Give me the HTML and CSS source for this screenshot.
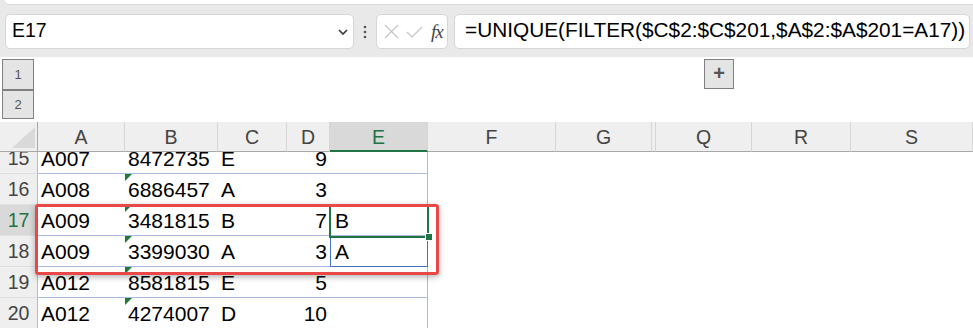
FILE: index.html
```html
<!DOCTYPE html>
<html lang="en">
<head>
    <meta charset="UTF-8">
    <title>Book1 - Excel</title>
    <link rel="stylesheet" href="styles.css">
</head>
<body>
    <div class="topbar">
        <div class="ribbon-edge"></div>
        <div class="formula-row">
            <div class="namebox">
                <span>E17</span>
                <svg class="chevron" width="10" height="6" viewBox="0 0 10 6"><path d="M1 1 L5 5 L9 1" fill="none" stroke="#333" stroke-width="1.6"/></svg>
            </div>
            <div class="grip">
                <svg width="4" height="14" viewBox="0 0 4 14"><circle cx="2" cy="2" r="1.3" fill="#555"/><circle cx="2" cy="7" r="1.3" fill="#555"/><circle cx="2" cy="12" r="1.3" fill="#555"/></svg>
            </div>
            <div class="fxbox">
                <svg width="15" height="15" viewBox="0 0 15 15"><path d="M1 1 L14 14 M14 1 L1 14" stroke="#c4c4c4" stroke-width="1.2"/></svg>
                <svg width="17" height="12" viewBox="0 0 17 12"><path d="M1 6 L6 11 L16 1" fill="none" stroke="#c4c4c4" stroke-width="1.2"/></svg>
                <span class="fx">fx</span>
            </div>
            <div class="formula">=UNIQUE(FILTER($C$2:$C$201,$A$2:$A$201=A17))</div>
        </div>
    </div>

    <div class="outline">
        <div class="levels">
            <div class="level">1</div>
            <div class="level">2</div>
        </div>
        <div class="expand">+</div>
    </div>

    <div class="sheet">
        <div class="colhead corner"></div>
        <div class="colhead">A</div>
        <div class="colhead">B</div>
        <div class="colhead">C</div>
        <div class="colhead">D</div>
        <div class="colhead active">E</div>
        <div class="colhead">F</div>
        <div class="colhead">G</div>
        <div class="colhead hidden"></div>
        <div class="colhead">Q</div>
        <div class="colhead">R</div>
        <div class="colhead">S</div>

        <div class="rowhead">15</div>
        <div class="c">A007</div>
        <div class="c">8472735</div>
        <div class="c">E</div>
        <div class="c num">9</div>
        <div class="c last"></div>
        <div class="rest"></div>

        <div class="rowhead">16</div>
        <div class="c">A008</div>
        <div class="c warn">6886457</div>
        <div class="c">A</div>
        <div class="c num">3</div>
        <div class="c last"></div>
        <div class="rest"></div>

        <div class="rowhead active">17</div>
        <div class="c">A009</div>
        <div class="c warn">3481815</div>
        <div class="c">B</div>
        <div class="c num">7</div>
        <div class="c last">B</div>
        <div class="rest"></div>

        <div class="rowhead">18</div>
        <div class="c">A009</div>
        <div class="c warn">3399030</div>
        <div class="c">A</div>
        <div class="c num">3</div>
        <div class="c last spill">A</div>
        <div class="rest"></div>

        <div class="rowhead">19</div>
        <div class="c">A012</div>
        <div class="c warn">8581815</div>
        <div class="c">E</div>
        <div class="c num">5</div>
        <div class="c last"></div>
        <div class="rest"></div>

        <div class="rowhead">20</div>
        <div class="c">A012</div>
        <div class="c warn">4274007</div>
        <div class="c">D</div>
        <div class="c num">10</div>
        <div class="c last"></div>
        <div class="rest"></div>

        <div class="selection"></div>
        <div class="callout"></div>
    </div>
</body>
</html>
```

FILE: styles.css
```css
:root {
    --chrome-bg: #e9e9e9;
    --box-border: #d6d6d6;
    --head-bg: #efefef;
    --head-sel: #d9d9d9;
    --head-text: #444;
    --excel-green: #217346;
    --grid-blue: #a8bbe0;
    --spill-blue: #4472c4;
    --callout-red: #e94848;
}
body {
    margin: 0;
    width: 973px;
    height: 328px;
    overflow: hidden;
    font-family: "Liberation Sans", Arial, sans-serif;
    background: #fff;
    color: #000;
}

/* formula bar */
.topbar {
    height: 57px;
    background: var(--chrome-bg);
}
.ribbon-edge {
    height: 4px;
    margin-left: 5px;
    background: #fff;
    border-radius: 0 0 0 6px;
    box-shadow: 0 1px 1px rgba(0, 0, 0, 0.08);
}
.formula-row {
    display: flex;
    height: 35px;
    margin-top: 10px;
    padding: 0 3px 0 5px;
}
.namebox,
.fxbox,
.formula {
    box-sizing: border-box;
    height: 35px;
    background: #fff;
    border: 1px solid var(--box-border);
    border-radius: 5px;
    display: flex;
    align-items: center;
}
.namebox {
    width: 349px;
    padding: 0 5px 2px 6px;
    font-size: 19.5px;
}
.chevron {
    margin-left: auto;
    margin-top: 3px;
}
.grip {
    width: 22px;
    display: flex;
    align-items: center;
    justify-content: center;
}
.fxbox {
    width: 72px;
    padding: 0 4px 0 7px;
    gap: 7px;
}
.fx {
    font-family: "Liberation Serif", serif;
    font-style: italic;
    font-size: 19px;
    color: #444;
    margin-left: 1px;
    letter-spacing: -1px;
}
.formula {
    flex: 1;
    margin-left: 6px;
    padding: 0 0 3px 10px;
    font-size: 20.8px;
    white-space: nowrap;
}

/* outline */
.outline {
    height: 65px;
    display: flex;
    align-items: flex-start;
}
.levels {
    margin: 2px 0 0 2px;
    border: 1px solid #808080;
}
.level {
    box-sizing: border-box;
    width: 30px;
    height: 29px;
    background: #e4e4e4;
    color: #555;
    font-size: 13px;
    display: flex;
    align-items: center;
    justify-content: center;
}
.level + .level {
    border-top: 2px solid #808080;
}
.expand {
    box-sizing: border-box;
    width: 30px;
    height: 30px;
    margin: 2px 0 0 670px;
    background: #e4e4e4;
    border: 1px solid #808080;
    color: #555;
    font-size: 20px;
    font-weight: bold;
    display: flex;
    align-items: center;
    justify-content: center;
    padding-bottom: 2px;
}

/* grid */
.sheet {
    position: relative;
    display: grid;
    grid-template-columns: 38px 87px 93px 69px 43px 98px 128px 96px 4px 96px 99px 1fr;
    grid-template-rows: 30px 22px repeat(5, 31px);
}
.colhead {
    box-sizing: border-box;
    background: var(--head-bg);
    border-right: 1px solid #d6d6d6;
    border-bottom: 1px solid #a8a8a8;
    color: var(--head-text);
    font-size: 19.5px;
    display: flex;
    align-items: center;
    justify-content: center;
    padding-top: 2px;
}
.colhead.active {
    background: var(--head-sel);
    color: var(--excel-green);
    border-bottom: 2px solid var(--excel-green);
}
.corner {
    position: relative;
    border-right: 1px solid #a8a8a8;
}
.corner::after {
    content: "";
    position: absolute;
    left: 12px;
    top: 5px;
    width: 23px;
    height: 21px;
    background: #d9d9d9;
    clip-path: polygon(100% 0, 100% 100%, 0 100%);
}
.rowhead {
    box-sizing: border-box;
    background: var(--head-bg);
    border-right: 1px solid var(--grid-blue);
    border-bottom: 1px solid #dedede;
    color: var(--head-text);
    font-size: 19.5px;
    display: flex;
    align-items: flex-end;
    justify-content: center;
    padding-bottom: 3px;
}
.rowhead.active {
    background: var(--head-sel);
    color: var(--excel-green);
    border-right: 1px solid var(--excel-green);
}
.c {
    box-sizing: border-box;
    position: relative;
    border-bottom: 1px solid var(--grid-blue);
    font-size: 21px;
    white-space: nowrap;
    display: flex;
    align-items: flex-end;
    padding: 0 3px 2px 3px;
}
.c.num {
    justify-content: flex-end;
}
.c.last {
    border-right: 1px solid var(--grid-blue);
    padding-left: 5px;
}
.c.spill {
    border-left: 1px solid var(--spill-blue);
    border-right: 1px solid var(--spill-blue);
    border-bottom: 1px solid var(--spill-blue);
    padding-left: 4px;
}
.c.warn::before {
    content: "";
    position: absolute;
    left: 0;
    top: 0;
    border-top: 7px solid #1f7a34;
    border-right: 7px solid transparent;
}
.rest {
    grid-column: 7 / -1;
}

/* overlays */
.selection {
    position: absolute;
    left: 329px;
    top: 83px;
    width: 100px;
    height: 33px;
    box-sizing: border-box;
    border: 2px solid var(--excel-green);
}
.selection::after {
    content: "";
    position: absolute;
    right: -5px;
    bottom: -4px;
    width: 6px;
    height: 6px;
    background: var(--excel-green);
    border: 1px solid #fff;
    box-sizing: content-box;
    margin: -1px;
}
.callout {
    position: absolute;
    left: 35px;
    top: 82px;
    width: 404px;
    height: 71px;
    box-sizing: border-box;
    border: 3px solid var(--callout-red);
    border-radius: 3px;
    box-shadow: 0 2px 6px rgba(0, 0, 0, 0.3);
}
```
